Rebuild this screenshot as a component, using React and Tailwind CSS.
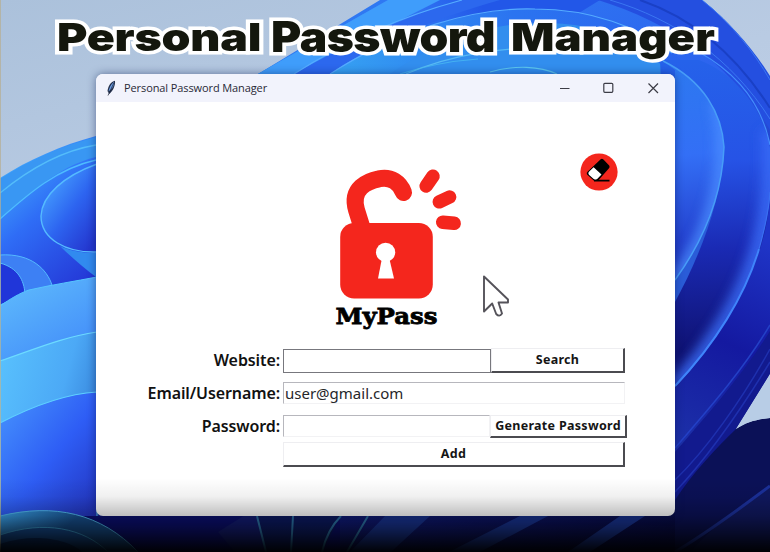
import React from "react";

function Wallpaper() {
  return (
    <svg className="absolute inset-0 h-full w-full" viewBox="0 0 770 552" preserveAspectRatio="none" fill="none">
      <defs>
        <linearGradient id="sky" x1="0" y1="0" x2="0.4" y2="1">
          <stop offset="0" stopColor="#abc1db" /><stop offset="0.4" stopColor="#b9cbe3" /><stop offset="1" stopColor="#c4d6ec" />
        </linearGradient>
        <linearGradient id="disk" gradientUnits="userSpaceOnUse" x1="420" y1="0" x2="640" y2="552">
          <stop offset="0" stopColor="#2f78f2" /><stop offset="0.3" stopColor="#2c63ee" /><stop offset="0.55" stopColor="#1a2cb4" /><stop offset="1" stopColor="#070a45" />
        </linearGradient>
        <linearGradient id="ribbon" gradientUnits="userSpaceOnUse" x1="260" y1="70" x2="480" y2="0">
          <stop offset="0" stopColor="#2f9cf0" /><stop offset="0.5" stopColor="#3c8cfa" /><stop offset="1" stopColor="#2257e8" />
        </linearGradient>
        <linearGradient id="crown" gradientUnits="userSpaceOnUse" x1="330" y1="70" x2="700" y2="40">
          <stop offset="0" stopColor="#36a2f2" /><stop offset="0.5" stopColor="#2b74f0" /><stop offset="1" stopColor="#2a63ee" />
        </linearGradient>
        <linearGradient id="leftTop" gradientUnits="userSpaceOnUse" x1="0" y1="180" x2="96" y2="290">
          <stop offset="0" stopColor="#3fa2fb" /><stop offset="0.35" stopColor="#2f6df6" /><stop offset="1" stopColor="#2230d2" />
        </linearGradient>
        <linearGradient id="loop" gradientUnits="userSpaceOnUse" x1="40" y1="190" x2="100" y2="235">
          <stop offset="0" stopColor="#46a2ff" /><stop offset="0.5" stopColor="#2d64f0" /><stop offset="1" stopColor="#2437cf" />
        </linearGradient>
        <linearGradient id="band1" gradientUnits="userSpaceOnUse" x1="0" y1="290" x2="40" y2="360">
          <stop offset="0" stopColor="#5db9fc" /><stop offset="1" stopColor="#4794fa" />
        </linearGradient>
        <linearGradient id="band2" gradientUnits="userSpaceOnUse" x1="0" y1="360" x2="110" y2="390">
          <stop offset="0" stopColor="#58c0fd" /><stop offset="0.6" stopColor="#4ca9f6" /><stop offset="1" stopColor="#347fd7" />
        </linearGradient>
        <linearGradient id="band3" gradientUnits="userSpaceOnUse" x1="0" y1="410" x2="110" y2="500">
          <stop offset="0" stopColor="#448ffc" /><stop offset="0.5" stopColor="#2e5df5" /><stop offset="1" stopColor="#2232bd" />
        </linearGradient>
        <linearGradient id="innerR" gradientUnits="userSpaceOnUse" x1="665" y1="60" x2="690" y2="300">
          <stop offset="0" stopColor="#2c79ef" /><stop offset="0.4" stopColor="#336ff6" /><stop offset="0.75" stopColor="#2442cf" /><stop offset="1" stopColor="#1a2cae" />
        </linearGradient>
        <linearGradient id="outerR" gradientUnits="userSpaceOnUse" x1="700" y1="60" x2="715" y2="350">
          <stop offset="0" stopColor="#2562ea" /><stop offset="0.35" stopColor="#2653e6" /><stop offset="0.65" stopColor="#1a2ab4" /><stop offset="1" stopColor="#0f1273" />
        </linearGradient>
        <linearGradient id="lowR" gradientUnits="userSpaceOnUse" x1="765" y1="240" x2="675" y2="440">
          <stop offset="0" stopColor="#1f35c8" /><stop offset="0.5" stopColor="#1419a0" /><stop offset="1" stopColor="#1c30a8" />
        </linearGradient>
        <linearGradient id="tealFan" gradientUnits="userSpaceOnUse" x1="0" y1="510" x2="30" y2="552">
          <stop offset="0" stopColor="#3da9f2" /><stop offset="1" stopColor="#17508f" />
        </linearGradient>
        <clipPath id="outerClip"><path d="M675 60H699C740 76 772 118 772 170C770 250 735 322 675 388Z" /></clipPath>
        <clipPath id="innerClip"><path d="M663 61C704 81 722 114 724 147C722 199 701 244 675 280V70Z" /></clipPath>
        <filter id="soft" x="-60%" y="-20%" width="220%" height="140%"><feGaussianBlur stdDeviation="6" /></filter>
      </defs>
      <rect width="770" height="552" fill="url(#sky)" />

      {/* bloom head */}
      <path d="M380 0H702C732 24 754 52 770 80V374L736 429L700 552H96V160L258 74Z" fill="url(#disk)" />
      <path d="M388 0L258 74H480L600 0Z" fill="url(#ribbon)" />
      <path d="M258 74L388 0H440L294 74Z" fill="#3f9dfb" />
      <path d="M294 74C350 42 410 14 462 0H500C430 20 370 46 330 74Z" fill="#2c68ee" />
      <path d="M330 74C400 30 475 8 535 9C620 9 680 48 716 98L675 90V74Z" fill="url(#crown)" />
      <path d="M390 74C450 32 500 22 550 23C620 26 650 50 675 80V74Z" fill="#328eee" />
      <g stroke="#55acff" strokeWidth="1.1">
        <path d="M294 74C350 38 410 14 462 0" />
        <path d="M330 74C400 29 475 7 535 9C590 9 640 27 672 53" />
        <path d="M406 74C450 55 510 44 560 50" stroke="#67cdf8" opacity=".7" />
        <path d="M400 74C425 66 450 61 478 59" stroke="#4bbff2" opacity=".7" />
        <path d="M490 72C515 65 540 66 557 74" stroke="#5cc7ef" />
      </g>
      <path d="M598 0C675 24 732 66 770 130V76C754 50 730 22 702 0Z" fill="#244fe0" />
      <path d="M640 0C690 17 735 53 770 108" stroke="#1a40c6" strokeWidth="2" />
      <path d="M610 0C675 19 732 59 770 119M702 0C732 24 754 52 770 80" stroke="#3a76f2" />

      {/* right-hand petals, back to front */}
      <path d="M675 388C735 322 770 250 770 190V374L736 429L675 500Z" fill="url(#lowR)" />
      <path d="M675 448C706 412 742 372 770 325" stroke="#2340c6" strokeWidth="1.5" />
      <path d="M675 452C706 416 742 376 770 331V374L736 429L675 502Z" fill="#121a8e" />
      <path d="M675 480C706 450 742 400 770 349M675 492C710 455 742 408 770 362" stroke="#1e30ae" strokeWidth="1.5" />
      <path d="M660 60H699C740 76 772 118 772 170C770 250 735 322 675 388Z" fill="url(#outerR)" />
      <g clipPath="url(#outerClip)">
        <path d="M770 130C778 240 740 315 675 388" stroke="#3a6cf6" strokeWidth="17" opacity=".85" filter="url(#soft)" />
      </g>
      <path d="M675 386C715 344 745 296 759 249" stroke="#3f84fb" strokeWidth="2" />
      <path d="M759 249C765 228 769 208 770 192" stroke="#3a70f2" strokeWidth="1.2" />
      <path d="M699 52C738 74 762 104 770 145" stroke="#438efc" strokeWidth="1.2" />
      <path d="M724 147C722 199 701 254 675 302V280Z" fill="#2a5cd8" />
      <path d="M663 61C704 81 722 114 724 147C722 199 701 244 675 280V70Z" fill="url(#innerR)" />
      <g clipPath="url(#innerClip)">
        <path d="M718 100C732 160 718 225 675 282" stroke="#4c8dff" strokeWidth="16" opacity=".8" filter="url(#soft)" />
      </g>
      <path d="M663 61C704 81 722 114 724 147C722 199 701 244 675 280" stroke="#479df8" strokeWidth="1.5" />
      <path d="M675 552V500C692 474 716 448 736 429C746 422 757 419 770 418V552Z" fill="#0b1157" />
      <path d="M770 374L736 429C746 422 757 419 770 418Z" fill="#b8cde6" />
      <path d="M690 552C718 522 742 502 770 488V552Z" fill="#10185f" />
      <path d="M675 552C705 534 738 510 770 486" stroke="#1b309a" strokeWidth="3" />

      {/* left-hand petals */}
      <path d="M0 178C28 160 62 145 96 136V300H0Z" fill="url(#leftTop)" />
      <path d="M0 179C28 161 62 146 96 137V157C55 167 28 197 0 219Z" fill="#3997f3" />
      <path d="M0 193C28 170 60 151 96 145" stroke="#54bdfa" strokeWidth="1.3" />
      <path d="M0 219C25 197 55 169 96 160" stroke="#4ebcff" strokeWidth="1.3" />
      <path d="M60 246C70 256 84 268 96 277V253C80 253 68 250 60 246Z" fill="#318aef" />
      <path d="M97 164C64 176 42 195 41 216C41 239 66 253 97 252Z" fill="url(#loop)" stroke="#55bbff" strokeWidth="1.4" />
      <path d="M0 255C32 253 47 270 52 285L0 305Z" fill="#3d80f4" stroke="#54b9ff" />
      <path d="M0 263C18 268 24 280 25 294L0 305Z" fill="#2036d9" stroke="#55bbff" />
      <path d="M0 306C10 299 20 293 29 290C51 285 76 281 97 277V335L0 365Z" fill="url(#band1)" stroke="#56c6ff" />
      <path d="M0 361C30 351 62 337 97 332V395L0 427Z" fill="url(#band2)" stroke="#6cdbff" strokeWidth="1.2" />
      <path d="M0 423C27 409 63 394 97 392V552H0Z" fill="url(#band3)" stroke="#5fd1ff" strokeWidth="1.2" />
      <path d="M74 516H340V552H110Z" fill="#0c1078" />
      <path d="M0 516C54 503 101 513 138 552H0Z" fill="url(#tealFan)" stroke="#50baf1" />
      <path d="M0 535C44 520 84 528 108 552H0Z" fill="#164c91" stroke="#3ca0d4" />
      <path d="M0 544C35 532 70 540 82 552H0Z" fill="#0b2c63" />
      <path d="M218 532L245 515H258L266 552H235Z" fill="#151e7c" />
      <path d="M257 516H340L322 552H266Z" fill="#0d1c68" />
      <path d="M257 516L266 552M293 516L291 552M341 516C331 526 325 539 322 552M368 516L347 552M391 516L369 552" stroke="#317fb8" strokeWidth="2" />
      <path d="M350 552L385 516H430L391 552ZM449 552L520 516H548L480 552ZM568 552L620 516H645L590 552Z" fill="#1b389e" />
      <path d="M0.5 0V552" stroke="#b6ae91" strokeOpacity=".7" />
    </svg>
  );
}

function Feather() {
  return (
    <svg className="h-4 w-[10px]" viewBox="0 0 10 16">
      <path d="M9 .7C5 1.5 2 6 1.5 11L3.2 14C7 11 9.6 5 9 .7Z" fill="#26324d" />
      <path d="M8 2C4.5 4.5 3.2 8 2.6 11.5C6.8 8.5 8 5.5 8 2Z" fill="#6c9ee4" />
      <path d="M7.8 3L2 15.5" stroke="#172036" strokeWidth=".7" />
    </svg>
  );
}

function Logo() {
  return (
    <svg className="h-[175px] w-[150px]" viewBox="0 0 150 175">
      <path d="M36.5 66L31.5 50C25 28 43 21 54 18.8C66 16 75 23 78.5 32.5" fill="none" stroke="#f4261d" strokeWidth="17" strokeLinecap="round" />
      <rect x="15.2" y="63" width="92.6" height="75.5" rx="14" fill="#f4261d" />
      <g stroke="#f4261d" strokeWidth="13.5" strokeLinecap="round">
        <path d="M101.2 26L108 16.2M114.3 41.8L124.6 37M117.7 62.2L129.2 63.3" />
      </g>
      <circle cx="60.6" cy="92.3" r="9.6" fill="#fff" />
      <path d="M57 98H64.2L69 118.5H53Z" fill="#fff" />
      <text x="10.5" y="164" textLength="102" lengthAdjust="spacingAndGlyphs" fill="#000" stroke="#000" strokeWidth=".8" className="font-['DejaVu_Serif',serif] text-[23px] font-bold">MyPass</text>
    </svg>
  );
}

function EraserButton() {
  return (
    <button className="size-[38px]" aria-label="Clear">
      <svg viewBox="0 0 38 38">
        <circle cx="19" cy="19" r="18.6" fill="#f4261d" />
        <path d="M20.7 6.2Q22 5.2 23.4 6.5L29.2 12.5Q30.2 14 29 15.3L18 27.7H14L7 21.5Q6.2 20 7.5 18.8Z" fill="#000" />
        <path d="M13.6 14.2L21.5 21.4L17.2 26Q15.3 27.4 13.4 25.8L8.9 21.7Q7.5 20 9.2 18.5Z" fill="#fff" />
        <path d="M14 27.6H29.5" stroke="#000" strokeWidth="1.7" />
      </svg>
    </button>
  );
}

function Label({ children }) {
  return <label className="w-[184px] shrink-0 text-right font-['Noto_Sans',sans-serif] text-[16px] leading-[23px] font-semibold tracking-[-0.1px] whitespace-nowrap text-[#111]">{children}</label>;
}

const btn = "border border-t-[#eeeef1] border-l-[#eeeef1] border-r-2 border-b-2 border-r-[#4b4b50] border-b-[#4b4b50] bg-white text-center font-['Noto_Sans',sans-serif] text-[12.5px] leading-4 tracking-[0.3px] font-bold text-[#151515] whitespace-nowrap";

function AppWindow() {
  return (
    <main className="absolute top-[74px] left-[96px] flex h-[442px] w-[579px] flex-col overflow-hidden rounded-[7px] bg-white shadow-[0_0_9px_rgba(10,25,80,0.5)]">
      <header className="flex h-7 shrink-0 items-center bg-[#f2f3fc] pl-[10px]">
        <Feather />
        <h1 className="ml-2 font-['Open_Sans',sans-serif] text-[11px] leading-4 tracking-[-0.1px] text-[#292936]">Personal Password Manager</h1>
        <div className="ml-auto flex items-center pr-4">
          <svg className="h-3 w-[100px]" viewBox="0 0 100 12" fill="none" stroke="#3c3c46" strokeWidth="1.2">
            <path d="M1 6.5H10.5M89.5 1.5L99 11M99 1.5L89.5 11" />
            <rect x="44.8" y="1.3" width="9" height="9" rx="1" />
          </svg>
        </div>
      </header>
      <div className="flex h-[246px] shrink-0 items-start">
        <div className="ml-[229px] pt-[58px]"><Logo /></div>
        <div className="ml-[105px] pt-[51px]"><EraserButton /></div>
      </div>
      <form className="flex flex-col">
        <div className="flex h-[25px] items-center">
          <Label>Website:</Label>
          <input className="ml-[3px] h-6 w-[208px] border border-[#77777d] bg-white outline-none" />
          <button type="button" className={`h-[25px] w-[134px] ${btn}`}>Search</button>
        </div>
        <div className="mt-[9px] flex h-[22px] items-center">
          <Label>Email/Username:</Label>
          <input className="ml-[3px] h-[22px] w-[342px] border border-t-[#b7b7bd] border-r-[#f2f2f4] border-b-[#f2f2f4] border-l-[#b7b7bd] bg-white pl-[1px] font-['Noto_Sans',sans-serif] text-[15px] text-[#26262a] outline-none" defaultValue="user@gmail.com" />
        </div>
        <div className="mt-[11px] flex h-[22px] items-center">
          <Label>Password:</Label>
          <input className="ml-[3px] h-[22px] w-[207px] border border-t-[#b7b7bd] border-r-[#f2f2f4] border-b-[#f2f2f4] border-l-[#b7b7bd] bg-white outline-none" />
          <button type="button" className={`h-[23px] w-[137px] ${btn}`}>Generate Password</button>
        </div>
        <button type="button" className={`mt-[5px] ml-[187px] h-[25px] w-[342px] ${btn}`}>Add</button>
      </form>
    </main>
  );
}

const outlined = "[-webkit-text-stroke:7px_white] [paint-order:stroke_fill] [stroke-linejoin:round]";

export default function App() {
  return (
    <div className="relative h-[552px] w-[770px] overflow-hidden bg-[#b5c8df]">
      <Wallpaper />
      <div className={`absolute top-[14px] left-[57px] flex h-[46px] items-center font-['Inter',sans-serif] leading-[46px] font-black whitespace-nowrap text-[#14170d] ${outlined}`}>
        <span className="w-[214px] origin-left scale-x-[1.19] text-[39px] tracking-[-0.2px]">Personal</span>
        <span className="w-[240px] origin-left scale-x-[1.1] text-[42px] tracking-[-0.5px]">Password</span>
        <span className="origin-left scale-x-[1.165] text-[39px]">Manager</span>
      </div>
      <AppWindow />
      <svg className="absolute top-[273px] left-[481px] h-[46px] w-[31px]" viewBox="0 0 31 46">
        <path d="M3 3.5V38.5L11.2 30.5L15.2 41Q18.5 44.5 21 40.5L17.5 29.5H27V26.5Z" fill="#fff" stroke="#55535a" strokeWidth="1.9" strokeLinejoin="round" />
      </svg>
      <div className="pointer-events-none absolute inset-x-0 bottom-0 h-[74px] bg-[linear-gradient(to_bottom,transparent,rgba(0,0,0,0.06)_25%,rgba(0,0,0,0.25)_51%,rgba(0,0,0,0.58)_75%,rgba(0,0,0,0.96))]" />
    </div>
  );
}
